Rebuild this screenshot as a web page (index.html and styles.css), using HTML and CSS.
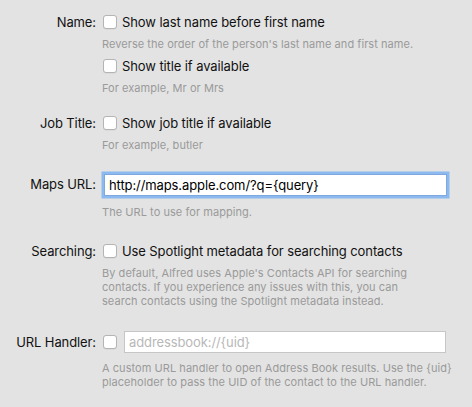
FILE: index.html
```html
<!DOCTYPE html>
<html lang="en">
<head>
<meta charset="utf-8">
<title>Contacts</title>
<link rel="stylesheet" href="styles.css">
</head>
<body>
<div class="prefs">
  <div class="row row-name">
    <div class="label">Name:</div>
    <div class="field">
      <label class="check"><span class="box"></span>Show last name before first name</label>
      <p class="hint">Reverse the order of the person's last name and first name.</p>
      <label class="check check-second"><span class="box"></span>Show title if available</label>
      <p class="hint">For example, Mr or Mrs</p>
    </div>
  </div>

  <div class="row row-job">
    <div class="label">Job Title:</div>
    <div class="field">
      <label class="check"><span class="box"></span>Show job title if available</label>
      <p class="hint">For example, butler</p>
    </div>
  </div>

  <div class="row row-maps">
    <div class="label">Maps URL:</div>
    <div class="field">
      <div class="text-input focused">http://maps.apple.com/?q={query}</div>
      <p class="hint hint-maps">The URL to use for mapping.</p>
    </div>
  </div>

  <div class="row row-search">
    <div class="label">Searching:</div>
    <div class="field">
      <label class="check"><span class="box"></span>Use Spotlight metadata for searching contacts</label>
      <p class="hint hint-search">By default, Alfred uses Apple's Contacts API for searching contacts. If you experience any issues with this, you can search contacts using the Spotlight metadata instead.</p>
    </div>
  </div>

  <div class="row row-handler">
    <div class="label">URL Handler:</div>
    <div class="field">
      <div class="inline">
        <span class="box"></span>
        <div class="text-input placeholder">addressbook://{uid}</div>
      </div>
      <p class="hint hint-handler">A custom URL handler to open Address Book results. Use the {uid} placeholder to pass the UID of the contact to the URL handler.</p>
    </div>
  </div>
</div>
</body>
</html>
```
FILE: styles.css
```css
html, body {
  margin: 0;
  padding: 0;
  background: #e3e3e3;
}

body {
  font-family: Inter, "Noto Sans", sans-serif;
  font-size: 13px;
  letter-spacing: -0.1px;
  color: #111;
  width: 472px;
  height: 407px;
  overflow: hidden;
}

.prefs {
  padding-top: 11px;
  display: flex;
  flex-direction: column;
}

.row {
  display: grid;
  grid-template-columns: 96px 1fr;
  column-gap: 6px;
}

.row-job { margin-top: 17px; }
.row-maps { margin-top: 20px; }
.row-search { margin-top: 21px; }
.row-handler { margin-top: 23px; }

.label {
  text-align: right;
  line-height: 22px;
  height: 22px;
  white-space: nowrap;
}

.row-maps .label { line-height: 24px; }

.field {
  display: flex;
  flex-direction: column;
  min-width: 0;
}

.check {
  display: flex;
  align-items: center;
  height: 22px;
  line-height: 22px;
  gap: 5px;
  white-space: nowrap;
}

.check-second { margin-top: 4px; }

.box {
  flex: none;
  width: 12px;
  height: 12px;
  margin-left: 1px;
  border: 1px solid #b4b4b4;
  border-radius: 3px;
  background: #fff;
  box-shadow: 0 0.5px 0 rgba(0,0,0,0.08);
}

.hint {
  margin: 4px 0 0 0;
  font-size: 11px;
  line-height: 14px;
  letter-spacing: 0.05px;
  color: #9a9a9a;
  padding-right: 14px;
}

.hint-maps { margin-top: 9px; }
.hint-search { max-width: 318px; padding-right: 0; }
.hint-handler { margin-top: 8px; }

.text-input {
  height: 22px;
  line-height: 22px;
  background: #fff;
  box-sizing: border-box;
  padding: 0 4px;
  white-space: nowrap;
  overflow: hidden;
}

.focused {
  width: 343px;
  margin-left: 2px;
  margin-top: 2px;
  border: 1px solid #7fa9de;
  box-shadow: 0 0 0 2.5px #8cbaf0;
  line-height: 20px;
  color: #000;
}

.inline {
  display: flex;
  align-items: center;
  gap: 7px;
  height: 22px;
}

.placeholder {
  flex: none;
  width: 322px;
  border: 1px solid #c6c6c6;
  line-height: 20px;
  color: #b8b8b8;
}
```
